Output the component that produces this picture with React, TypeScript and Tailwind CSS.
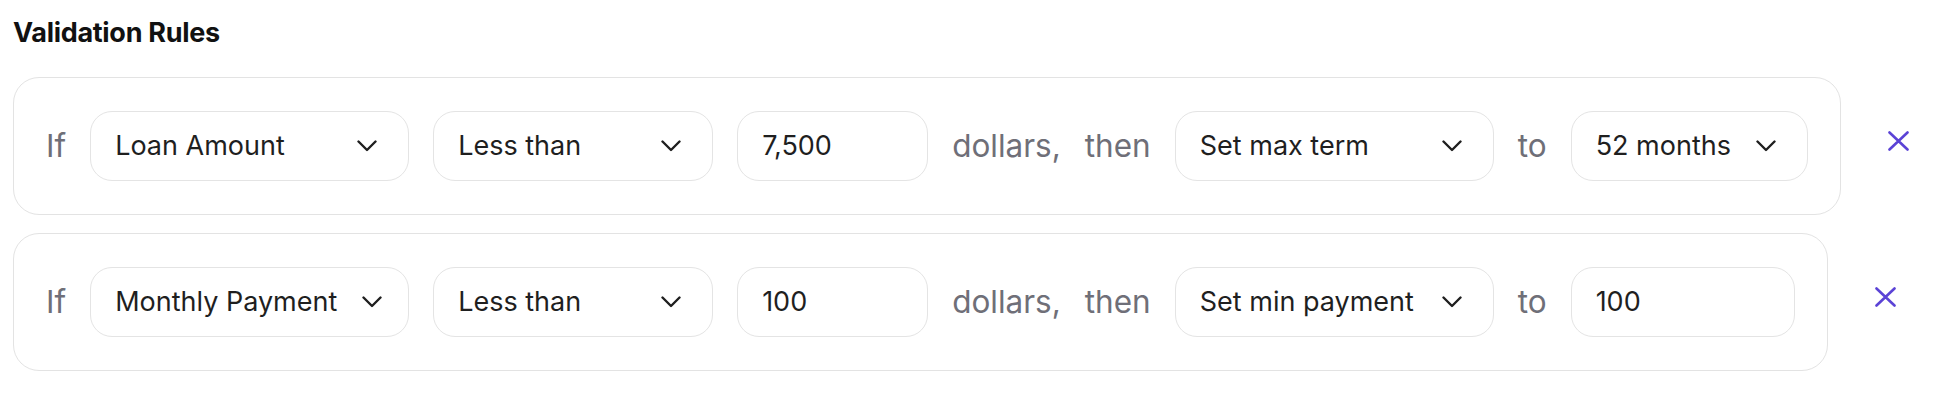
import { ReactNode } from 'react'

const FONT = { fontFamily: 'Inter, "Noto Sans", sans-serif' }

function Chevron() {
  return (
    <svg width="20" height="12" viewBox="0 0 20 12" fill="none" className="shrink-0">
      <path d="M1.5 1.5 10 10l8.5-8.5" stroke="#1f1f1f" strokeWidth="2.4" strokeLinecap="round" strokeLinejoin="round" />
    </svg>
  )
}

function Select({ value, width }: { value: string; width?: string }) {
  return (
    <button
      className={`flex h-[70px] shrink-0 items-center justify-between gap-[25px] rounded-[22px] border border-[#e4e4e4] bg-white pl-6 pr-[31px] text-[27px] text-[#1f1f1f] ${width ?? ''}`}
    >
      <span className="whitespace-nowrap">{value}</span>
      <Chevron />
    </button>
  )
}

function Field({ value, width }: { value: string; width: string }) {
  return (
    <div
      className={`flex h-[70px] shrink-0 items-center rounded-[22px] border border-[#e4e4e4] bg-white px-6 text-[27px] text-[#1f1f1f] ${width}`}
    >
      {value}
    </div>
  )
}

function Word({ children }: { children: ReactNode }) {
  return <span className="whitespace-nowrap text-[31.5px] text-[#6f6f78]">{children}</span>
}

function CloseButton() {
  return (
    <button className="mb-[11px] ml-[47px] p-0">
      <svg width="21" height="20" viewBox="0 0 21 20" fill="none">
        <path d="M1.5 1.5 19.5 18.5M19.5 1.5 1.5 18.5" stroke="#5b43d6" strokeWidth="2.6" strokeLinecap="round" />
      </svg>
    </button>
  )
}

type Rule = {
  field: string
  op: string
  amount: string
  action: string
  target: string
  targetIsSelect: boolean
}

const RULES: Rule[] = [
  { field: 'Loan Amount', op: 'Less than', amount: '7,500', action: 'Set max term', target: '52 months', targetIsSelect: true },
  { field: 'Monthly Payment', op: 'Less than', amount: '100', action: 'Set min payment', target: '100', targetIsSelect: false },
]

export default function App() {
  return (
    <div className="min-h-screen bg-white pl-[13px] pt-[15px]" style={FONT}>
      <h2 className="mb-[26px] text-[27px] leading-9 font-bold tracking-[-0.3px] text-[#111]">Validation Rules</h2>

      <div className="flex flex-col gap-[18px]">
        {RULES.map((r) => (
          <div key={r.field} className="flex items-center">
            <div className="flex items-center gap-6 rounded-[26px] border border-[#e3e3e3] bg-white py-[33px] pl-8 pr-8">
              <Word>If</Word>
              <Select value={r.field} width="w-[319px]" />
              <Select value={r.op} width="w-[280px]" />
              <Field value={r.amount} width="w-[191px]" />
              <Word>dollars,</Word>
              <Word>then</Word>
              <Select value={r.action} width="w-[319px]" />
              <Word>to</Word>
              {r.targetIsSelect ? <Select value={r.target} /> : <Field value={r.target} width="w-[224px]" />}
            </div>
            <CloseButton />
          </div>
        ))}
      </div>
    </div>
  )
}
